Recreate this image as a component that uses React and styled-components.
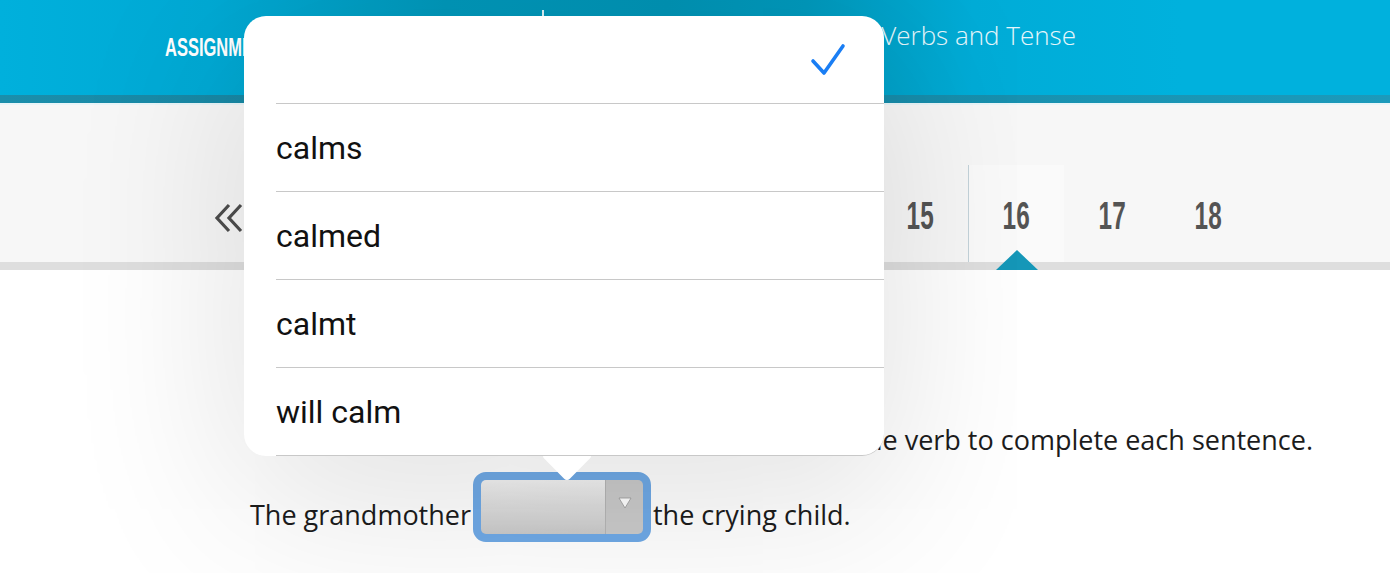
import React from "react";
import styled, { createGlobalStyle } from "styled-components";

const GlobalStyle = createGlobalStyle`
  html, body {
    margin: 0;
    padding: 0;
    background: #ffffff;
    overflow: hidden;
  }
`;

const pages = [9, 10, 11, 12, 13, 14, 15, 16, 17, 18];
const options = ["", "calms", "calmed", "calmt", "will calm"];

const Page = styled.div`
  position: relative;
  width: 1390px;
  height: 573px;
  overflow: hidden;
  background: #ffffff;
`;

const Header = styled.header`
  height: 95px;
  background: linear-gradient(
    90deg,
    #00b0dc 0%,
    #00a9d4 15%,
    #0096b8 32%,
    #0092b3 48%,
    #0098bb 58%,
    #00acd7 70%,
    #00b1dd 85%
  );
  display: flex;
  align-items: flex-start;
  color: #ffffff;
`;

// narrow caps face, squeezed horizontally
const Narrow = styled.span`
  display: inline-block;
  font-family: "Liberation Sans", Arial, sans-serif;
  font-weight: 700;
  transform: scaleX(${(p) => p.$squeeze || 0.66});
  transform-origin: ${(p) => p.$origin || "center"};
`;

const Brand = styled.div`
  margin: 33px 0 0 165px;
  width: 377px;
  font-size: 25px;
  text-transform: uppercase;
  white-space: nowrap;
`;

const Divider = styled.div`
  margin-top: 10px;
  width: 2px;
  height: 44px;
  background: rgba(255, 255, 255, 0.85);
`;

const Title = styled.div`
  margin-top: 17px;
  width: 532px;
  text-align: right;
  font-family: "Open Sans", sans-serif;
  font-size: 26px;
  font-weight: 300;
  color: #e6f6fb;
`;

const HeaderStrip = styled.div`
  height: 8px;
  background: linear-gradient(90deg, #1b8eab 0%, #137f9c 40%, #1994b3 80%, #1c9abb 100%);
  border-bottom: 2px solid #e9f5f8;
`;

const Nav = styled.nav`
  height: 157px;
  background: #f7f7f7;
  display: flex;
  align-items: flex-end;
  padding-left: 200px;
  border-bottom: 8px solid #dedede;
`;

const Back = styled.div`
  width: 60px;
  height: 97px;
  margin-right: 36px;
  display: flex;
  align-items: center;
  justify-content: center;
  padding-top: 8px;
  box-sizing: border-box;
`;

const PageItem = styled.div`
  position: relative;
  width: 96px;
  height: 97px;
  display: flex;
  align-items: center;
  justify-content: center;
  box-sizing: border-box;
  font-size: 38px;
  color: #545454;
  border-left: 1px solid ${(p) => (p.$active ? "#c3d3da" : "transparent")};
  background: ${(p) => (p.$active ? "rgba(255,255,255,0.35)" : "transparent")};
  padding-top: 6px;

  &::after {
    content: "";
    display: ${(p) => (p.$active ? "block" : "none")};
    position: absolute;
    left: 50%;
    bottom: -8px;
    transform: translateX(-50%);
    border-left: 21px solid transparent;
    border-right: 21px solid transparent;
    border-bottom: 20px solid #1597b8;
  }
`;

const Content = styled.main`
  padding: 150px 77px 0 250px;
  font-family: "Open Sans", sans-serif;
  font-size: 27px;
  color: #1c1c1c;
`;

const Instruction = styled.p`
  margin: 0;
  line-height: 40px;
  text-align: right;
  white-space: nowrap;
`;

const Sentence = styled.div`
  margin-top: 12px;
  display: flex;
  align-items: center;
  height: 70px;

  span {
    padding-top: 14px;
  }
`;

const Select = styled.div`
  width: 178px;
  height: 70px;
  box-sizing: border-box;
  border: 8px solid #6fa9e6;
  border-radius: 13px;
  background: #6fa9e6;
  display: flex;
  margin: 0 2px;
`;

const SelectField = styled.div`
  flex: 1;
  border-radius: 5px 0 0 5px;
  background: linear-gradient(#f1f1f1, #c9c9c9);
`;

const SelectCaret = styled.div`
  width: 38px;
  border-left: 1px solid #b5b5b5;
  border-radius: 0 5px 5px 0;
  background: #cacaca;
  display: flex;
  justify-content: center;
  padding-top: 17px;
  box-sizing: border-box;

  svg {
    display: block;
  }
`;

const Popover = styled.div`
  position: absolute;
  left: 244px;
  top: 16px;
  width: 640px;
  height: 440px;
  background: #ffffff;
  border-radius: 22px;
  box-shadow: 0 40px 170px 10px rgba(0, 0, 0, 0.12);

  &::after {
    content: "";
    position: absolute;
    left: 305px;
    bottom: -18px;
    width: 36px;
    height: 36px;
    background: #ffffff;
    border-radius: 4px;
    transform: rotate(45deg);
  }
`;

const OptionList = styled.ul`
  position: relative;
  z-index: 1;
  list-style: none;
  margin: 0;
  padding: 0 0 0 32px;
`;

const Option = styled.li`
  height: 87px;
  border-bottom: 1px solid #c8c8c8;
  display: flex;
  align-items: center;
  justify-content: space-between;
  padding-right: 38px;
  font-family: Roboto, "Liberation Sans", sans-serif;
  font-size: 32px;
  color: #111111;
  &:last-child {
    border-bottom-right-radius: 22px;
  }
`;

function Check() {
  return (
    <svg width="36" height="34" viewBox="0 0 36 34">
      <path
        d="M3 18 L14 30 L33 3"
        fill="none"
        stroke="#1a7ef4"
        strokeWidth="3.6"
        strokeLinecap="round"
        strokeLinejoin="round"
      />
    </svg>
  );
}

function DoubleChevron() {
  return (
    <svg width="32" height="30" viewBox="0 0 32 30">
      <path
        d="M15 2 L3 15 L15 28 M27 2 L15 15 L27 28"
        fill="none"
        stroke="#4d4d4d"
        strokeWidth="3.2"
        strokeLinejoin="miter"
      />
    </svg>
  );
}

export default function App() {
  return (
    <Page>
      <GlobalStyle />
      <Header>
        <Brand>
          <Narrow $origin="left">Assignments</Narrow>
        </Brand>
        <Divider />
        <Title>Grammar: Verbs and Tense</Title>
      </Header>
      <HeaderStrip />
      <Nav>
        <Back>
          <DoubleChevron />
        </Back>
        {pages.map((n) => (
          <PageItem key={n} $active={n === 16}>
            <Narrow $squeeze={0.64}>{n}</Narrow>
          </PageItem>
        ))}
      </Nav>
      <Content>
        <Instruction>
          Choose the correct tense form of the verb to complete each sentence.
        </Instruction>
        <Sentence>
          <span>The grandmother</span>
          <Select>
            <SelectField />
            <SelectCaret>
              <svg width="14" height="12" viewBox="0 0 14 12">
                <path d="M1 1 H13 L7 11 Z" fill="#ffffff" stroke="#9a9a9a" strokeWidth="0.8" />
              </svg>
            </SelectCaret>
          </Select>
          <span>the crying child.</span>
        </Sentence>
      </Content>
      <Popover>
        <OptionList>
          {options.map((o, i) => (
            <Option key={i}>
              <span>{o}</span>
              {i === 0 && <Check />}
            </Option>
          ))}
        </OptionList>
      </Popover>
    </Page>
  );
}
